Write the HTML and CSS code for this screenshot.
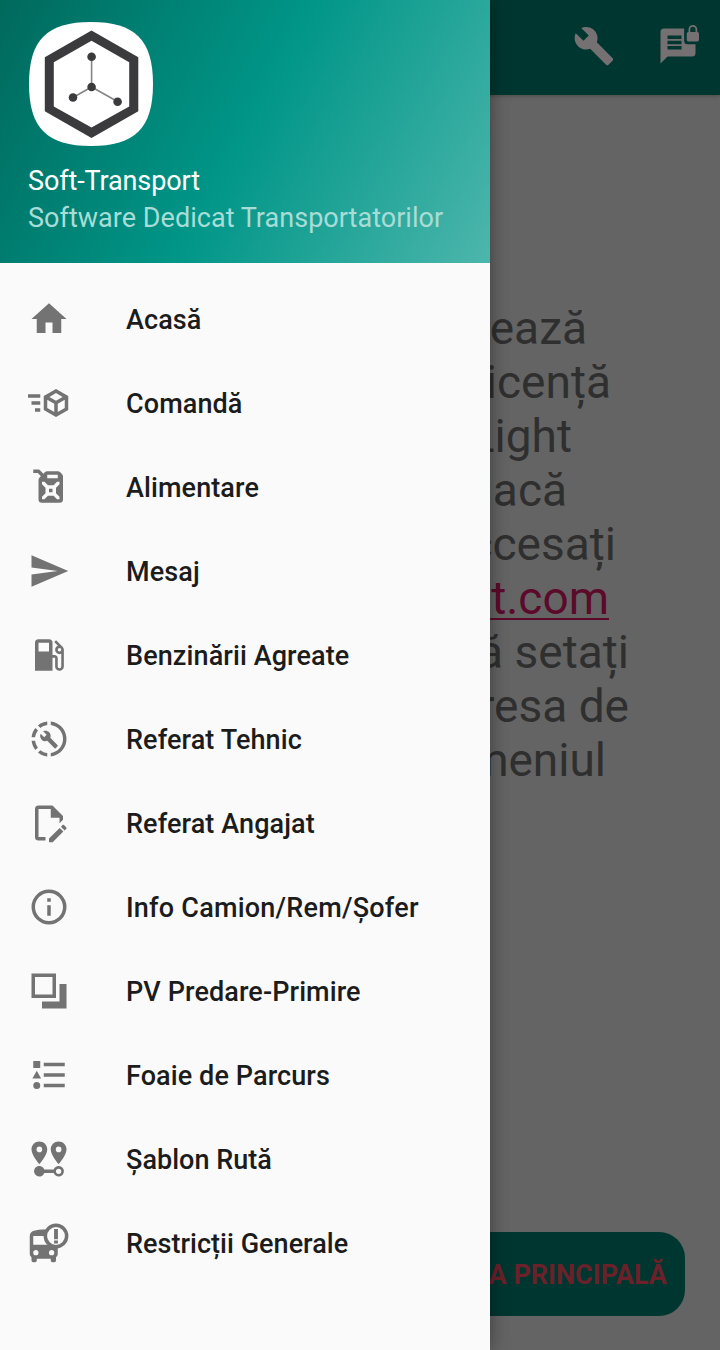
FILE: index.html
```html
<!DOCTYPE html>
<html lang="ro">
<head>
<meta charset="utf-8">
<title>Soft-Transport</title>
<link rel="stylesheet" href="styles.css">
</head>
<body>
<div class="app">
  <main class="page">
    <header class="toolbar">
      <svg class="icon" viewBox="0 0 24 24"><path d="M22.7,19L13.6,9.9C14.5,7.6 14,4.9 12.1,3C10.1,1 7.1,0.6 4.7,1.7L9,6L6,9L1.6,4.7C0.4,7.1 0.9,10.1 2.9,12.1C4.8,14 7.5,14.5 9.8,13.6L18.9,22.7C19.3,23.1 19.9,23.1 20.3,22.7L22.6,20.4C23.1,20 23.1,19.3 22.7,19Z"/></svg>
      <svg class="icon" viewBox="0 0 24 24"><path fill-rule="evenodd" d="M4 2H15.5V9A2 2 0 0 0 17.5 11H22V16A2 2 0 0 1 20 18H6L2 22V4A2 2 0 0 1 4 2ZM6 6V8H14V6ZM6 9V11H14V9ZM6 12V14H14V12Z"/><path fill-rule="evenodd" d="M18 4V2.5A2.5 2.5 0 0 1 23 2.5V4A1 1 0 0 1 24 5V8.4A1 1 0 0 1 23 9.4H18A1 1 0 0 1 17 8.4V5A1 1 0 0 1 18 4ZM19 4H22V2.5A1.5 1.5 0 0 0 19 2.5Z"/></svg>
    </header>
    <section class="notice">
      <p class="line l1">activează</p>
      <p class="line l2">licență</p>
      <p class="line l3">Light</p>
      <p class="line l4">dacă</p>
      <p class="line l5">accesați</p>
      <p class="line l6"><a class="link">soft-transport.com</a></p>
      <p class="line l7">să setați</p>
      <p class="line l8">adresa de</p>
      <p class="line l9">meniul</p>
    </section>
    <button class="home-button">PAGINA PRINCIPALĂ</button>
  </main>

  <aside class="drawer">
    <header class="drawer-head">
      <svg class="logo" viewBox="0 0 124 124">
        <path fill="#fff" d="M0 62C0 18 18 0 62 0S124 18 124 62S106 124 62 124S0 106 0 62Z"/>
        <path fill="#3b3b3d" fill-rule="evenodd" d="M62.5 8.5L109.3 35.3V89.3L62.5 116L15.8 89.3V35.3ZM62.5 18.8L24.8 40.2V84.5L62.5 105.6L100.2 84.5V40.2Z"/>
        <path fill="none" stroke="#858585" stroke-width="1.6" d="M62.6 35V65L44 75.5M62.6 65L88.5 79.5"/>
        <g fill="#3b3b3d"><circle cx="62.6" cy="34.7" r="4.3"/><circle cx="62.6" cy="65" r="4.3"/><circle cx="44" cy="75.5" r="4.3"/><circle cx="88.6" cy="79.7" r="4.3"/></g>
      </svg>
      <div class="title">Soft-Transport</div>
      <div class="subtitle">Software Dedicat Transportatorilor</div>
    </header>
    <nav class="menu">
      <a class="item"><svg class="icon" viewBox="0 0 24 24"><path d="M10,20V14H14V20H19V12H22L12,3L2,12H5V20H10Z"/></svg><span>Acasă</span></a>
      <a class="item"><svg class="icon" viewBox="0 0 24 24"><path d="M16,4L9,8.04V15.96L16,20L23,15.96V8.04M16,6.31L19.8,8.5L16,10.69L12.21,8.5M0,7V9H7V7M11,10.11L15,12.42V17.11L11,14.81M21,10.11V14.81L17,17.11V12.42M2,11V13H7V11M4,15V17H7V15"/></svg><span>Comandă</span></a>
      <a class="item"><svg class="icon" viewBox="0 0 24 24"><path fill-rule="evenodd" d="M3,2H6C6.28,2 6.53,2.11 6.71,2.29L8.79,4.38L9.59,3.59C10,3.2 10.5,3 11,3H17C17.5,3 18,3.2 18.41,3.59L19.41,4.59C19.8,5 20,5.5 20,6V19A2,2 0 0,1 18,21H8A2,2 0 0,1 6,19V8C6,7.5 6.2,7 6.59,6.59L7.38,5.79L5.59,4H3V2M11,5V7H17V5H11M11.41,11L9.41,9H8V10.41L10,12.41V15.59L8,17.59V19H9.41L11.41,17H14.59L16.59,19H18V17.59L16,15.59V12.41L18,10.41V9H16.59L14.59,11H11.41M12,13H14V15H12V13Z"/></svg><span>Alimentare</span></a>
      <a class="item"><svg class="icon" viewBox="0 0 24 24"><path d="M2,21L23,12L2,3V10L17,12L2,14V21Z"/></svg><span>Mesaj</span></a>
      <a class="item"><svg class="icon" viewBox="0 0 24 24"><path fill-rule="evenodd" d="M18,10A1,1 0 0,1 17,9A1,1 0 0,1 18,8A1,1 0 0,1 19,9A1,1 0 0,1 18,10M12,10H6V5H12M19.77,7.23L19.78,7.22L16.06,3.5L15,4.56L17.11,6.67C16.17,7 15.5,7.93 15.5,9A2.5,2.5 0 0,0 18,11.5C18.36,11.5 18.69,11.42 19,11.29V18.5A1,1 0 0,1 18,19.5A1,1 0 0,1 17,18.5V14A2,2 0 0,0 15,12H14V5A2,2 0 0,0 12,3H6A2,2 0 0,0 4,5V21H14V13.5H15.5V18.5A2.5,2.5 0 0,0 18,21A2.5,2.5 0 0,0 20.5,18.5V9C20.5,8.31 20.22,7.68 19.77,7.23Z"/></svg><span>Benzinării Agreate</span></a>
      <a class="item"><svg class="icon" viewBox="0 0 24 24"><path d="M13 2.03V4.05C17.39 4.59 20.5 8.58 19.96 12.97C19.5 16.61 16.64 19.5 13 19.93V21.93C18.5 21.38 22.5 16.5 21.95 11C21.5 6.25 17.73 2.5 13 2.03M11 2.06C9.05 2.25 7.19 3 5.67 4.26L7.1 5.74C8.22 4.84 9.57 4.26 11 4.06V2.06M4.26 5.67C3 7.19 2.24 9.04 2.05 11H4.05C4.24 9.58 4.8 8.23 5.69 7.1L4.26 5.67M2.06 13C2.26 14.96 3.03 16.81 4.27 18.33L5.69 16.9C4.81 15.77 4.24 14.42 4.06 13H2.06M7.1 18.37L5.67 19.74C7.18 21 9.04 21.79 11 22V20C9.58 19.82 8.23 19.25 7.1 18.37Z"/><path transform="translate(6.5 6.8) scale(.46)" d="M22.7,19L13.6,9.9C14.5,7.6 14,4.9 12.1,3C10.1,1 7.1,0.6 4.7,1.7L9,6L6,9L1.6,4.7C0.4,7.1 0.9,10.1 2.9,12.1C4.8,14 7.5,14.5 9.8,13.6L18.9,22.7C19.3,23.1 19.9,23.1 20.3,22.7L22.6,20.4C23.1,20 23.1,19.3 22.7,19Z"/></svg><span>Referat Tehnic</span></a>
      <a class="item"><svg class="icon" viewBox="0 0 24 24"><path d="M10,20H6V4H13V9H18V12.1L20,10.1V8L14,2H6A2,2 0 0,0 4,4V20A2,2 0 0,0 6,22H10V20M20.2,13C20.3,13 20.5,13.1 20.6,13.2L21.9,14.5C22.1,14.7 22.1,15.1 21.9,15.3L20.9,16.3L18.8,14.2L19.8,13.2C19.9,13.1 20,13 20.2,13M20.2,16.9L14.1,23H12V20.9L18.1,14.8L20.2,16.9Z"/></svg><span>Referat Angajat</span></a>
      <a class="item"><svg class="icon" viewBox="0 0 24 24"><path d="M11,9H13V7H11M12,20C7.59,20 4,16.41 4,12C4,7.59 7.59,4 12,4C16.41,4 20,7.59 20,12C20,16.41 16.41,20 12,20M12,2A10,10 0 0,0 2,12A10,10 0 0,0 12,22A10,10 0 0,0 22,12A10,10 0 0,0 12,2M11,17H13V11H11V17Z"/></svg><span class="wide">Info Camion/Rem/Șofer</span></a>
      <a class="item"><svg class="icon" viewBox="0 0 24 24"><path fill-rule="evenodd" d="M2,2V16H16V2ZM4,4H14V14H4ZM22,8V22H8V18H18V8Z"/></svg><span>PV Predare-Primire</span></a>
      <a class="item"><svg class="icon" viewBox="0 0 24 24"><path d="M5,9.5L7.5,14H2.5L5,9.5M3,4H7V8H3V4M5,20A2,2 0 0,0 7,18A2,2 0 0,0 5,16A2,2 0 0,0 3,18A2,2 0 0,0 5,20M9,5V7H21V5H9M9,19H21V17H9V19M9,13H21V11H9V13Z"/></svg><span>Foaie de Parcurs</span></a>
      <a class="item"><svg class="icon" viewBox="0 0 24 24"><path fill-rule="evenodd" d="M6.5,8.11A1.61,1.61 0 1,1 6.5,4.89A1.61,1.61 0 0,1 6.5,8.11M6.5,2C4,2 2,4 2,6.5C2,9.87 6.5,14.86 6.5,14.86C6.5,14.86 11,9.87 11,6.5C11,4 9,2 6.5,2M17.5,8.11A1.61,1.61 0 1,1 17.5,4.89A1.61,1.61 0 0,1 17.5,8.11M17.5,2C15,2 13,4 13,6.5C13,9.87 17.5,14.86 17.5,14.86C17.5,14.86 22,9.87 22,6.5C22,4 20,2 17.5,2M17.5,16C16.23,16 15.1,16.8 14.68,18H9.32C8.77,16.44 7.05,15.62 5.5,16.17C3.93,16.72 3.11,18.44 3.66,20C4.22,21.56 5.93,22.38 7.5,21.83C8.35,21.53 9,20.85 9.32,20H14.69C15.24,21.56 16.95,22.38 18.5,21.83C20.07,21.28 20.89,19.56 20.34,18C19.92,16.8 18.78,16 17.5,16M17.5,20.5A1.5,1.5 0 0,1 16,19A1.5,1.5 0 0,1 17.5,17.5A1.5,1.5 0 0,1 19,19A1.5,1.5 0 0,1 17.5,20.5Z"/></svg><span class="tight">Șablon Rută</span></a>
      <a class="item"><svg class="icon" viewBox="0 0 24 24"><path fill-rule="evenodd" d="M1 8C1 5 4.5 4.3 10 4.3H17V18C17 18.9 16.6 19.7 16 20.2V22A1 1 0 0 1 15 23H14A1 1 0 0 1 13 22V21H5V22A1 1 0 0 1 4 23H3A1 1 0 0 1 2 22V20.2C1.4 19.7 1 18.9 1 18ZM3 8V13H15V8ZM4.5 16A1.5 1.5 0 1 0 4.5 19A1.5 1.5 0 1 0 4.5 16ZM13.5 16A1.5 1.5 0 1 0 13.5 19A1.5 1.5 0 1 0 13.5 16Z"/><circle cx="16" cy="8" r="6.1" fill="#fafafa" stroke="#737373" stroke-width="2"/><path d="M14.9 4H17.1V9.8H14.9ZM14.9 10.6H17.1V12.3H14.9Z"/></svg><span class="tight">Restricții Generale</span></a>
    </nav>
  </aside>
</div>
</body>
</html>
```
FILE: styles.css
```css
body {
  margin: 0;
  font-family: Roboto, "Noto Sans", sans-serif;
}

.app {
  display: grid;
  grid-template: 1350px / 490px 230px;
  overflow: hidden;
}

.page {
  grid-area: 1 / 1 / 2 / 3;
  display: flex;
  flex-direction: column;
  background: #646464;
}

.toolbar {
  display: flex;
  justify-content: flex-end;
  gap: 42px;
  box-sizing: border-box;
  height: 95px;
  padding: 25px 21px 0 0;
  background: #003630;
  fill: #757172;
  box-shadow: 0 1px 4px rgba(0, 0, 0, 0.25);
}

.icon {
  display: block;
  flex: none;
  width: 42px;
  height: 42px;
}

.notice {
  flex: 1;
  padding-top: 206px;
  color: #2f2f2f;
  font-size: 46px;
  line-height: 54px;
  text-align: right;
}

.line {
  margin: 0;
  white-space: nowrap;
}

.l1 { padding-right: 133px; }
.l2 { padding-right: 109px; }
.l3 { padding-right: 148px; }
.l4 { padding-right: 153px; }
.l5 { padding-right: 104px; }
.l6 { padding-right: 111px; }
.l7 { padding-right: 91px; }
.l8 { padding-right: 91px; }
.l9 { padding-right: 114px; }

.link {
  color: #5c0a2a;
  text-decoration: underline;
  text-decoration-thickness: 2px;
  text-underline-offset: 4px;
  text-decoration-skip-ink: none;
}

.toolbar .icon {
  margin-top: -0.5px;
}

.home-button {
  align-self: flex-end;
  width: 650px;
  height: 84px;
  margin: 0 35px 34px 0;
  padding: 2px 18px 0 0;
  border: 0;
  border-radius: 26px;
  background: #003630;
  color: #6b2129;
  font: 700 27px Roboto, sans-serif;
  text-align: right;
}

.drawer {
  grid-area: 1 / 1;
  z-index: 1;
  background: #fafafa;
  box-shadow: 0 0 18px rgba(0, 0, 0, 0.4);
}

.drawer-head {
  box-sizing: border-box;
  height: 263px;
  padding: 22px 28px 0;
  background: linear-gradient(118.2deg, #00695c, #009688 50%, #4db6ac);
  font-size: 27px;
}

.logo {
  display: block;
  width: 124px;
  height: 124px;
  margin: 0 0 17px 1px;
}

.title {
  color: #fff;
  line-height: 37px;
  letter-spacing: -0.12px;
}

.subtitle {
  color: #a8dcd7;
  line-height: 37px;
  letter-spacing: 0.03px;
  white-space: nowrap;
}

.menu {
  padding-top: 14px;
}

.item {
  display: flex;
  align-items: center;
  gap: 56px;
  height: 84px;
  padding-left: 28px;
  color: #1c1c1c;
  fill: #737373;
  font-size: 27px;
  font-weight: 500;
  letter-spacing: 0.1px;
}

.item span {
  padding-top: 2px;
}

.item .wide {
  letter-spacing: 0.22px;
}

.item .tight {
  letter-spacing: 0.03px;
}
```
